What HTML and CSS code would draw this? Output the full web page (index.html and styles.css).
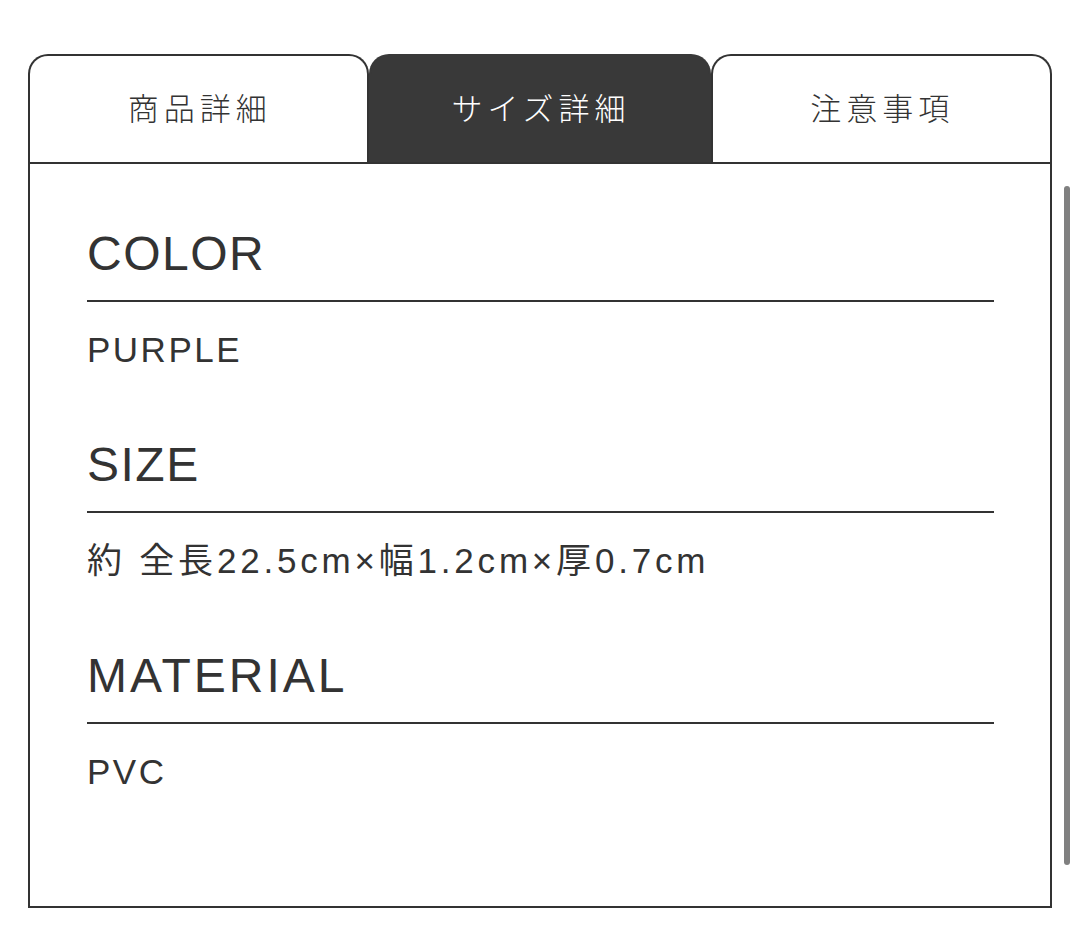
FILE: index.html
```html
<!DOCTYPE html>
<html lang="ja">
<head>
<meta charset="utf-8">
<title>サイズ詳細</title>
<link rel="stylesheet" href="styles.css">
</head>
<body>
<div class="wrap">
  <div class="tabs">
    <div class="tab">商品詳細</div>
    <div class="tab tab-active">サイズ詳細</div>
    <div class="tab">注意事項</div>
  </div>
  <div class="panel">
    <section class="spec">
      <h2 class="spec-title">COLOR</h2>
      <p class="spec-value">PURPLE</p>
    </section>
    <section class="spec">
      <h2 class="spec-title">SIZE</h2>
      <p class="spec-value spec-value-wide">約 全長22.5cm×幅1.2cm×厚0.7cm</p>
    </section>
    <section class="spec">
      <h2 class="spec-title spec-title-wide">MATERIAL</h2>
      <p class="spec-value">PVC</p>
    </section>
  </div>
  <div class="scrollbar"></div>
</div>
</body>
</html>
```

FILE: styles.css
```css
* { box-sizing: border-box; }
html, body { margin: 0; padding: 0; background: #fff; }
body {
  font-family: "Liberation Sans", "Noto Sans CJK JP", sans-serif;
  color: #333;
}
.wrap {
  position: relative;
  width: 1024px;
  margin: 54px 0 0 28px;
}
.tabs {
  display: flex;
  height: 108px;
}
.tab {
  flex: 1;
  display: flex;
  align-items: center;
  justify-content: center;
  border: 2px solid #333;
  border-bottom: none;
  border-radius: 20px 20px 0 0;
  background: #fff;
  font-family: "Noto Sans CJK JP", sans-serif;
  font-weight: 300;
  font-size: 31px;
  letter-spacing: 5px;
  padding-left: 2px;
  padding-bottom: 6px;
  color: #333;
}
.tab-active {
  background: #393939;
  border-color: #393939;
  color: #fff;
}
.panel {
  height: 746px;
  border: 2px solid #333;
  padding: 66px 56px 0 57px;
}
.spec { margin-bottom: 74px; }
.spec-title {
  margin: 0;
  font-weight: 400;
  font-size: 48px;
  line-height: 48px;
  letter-spacing: 1.5px;
  padding-bottom: 22px;
  border-bottom: 2px solid #333;
}
.spec-title-wide { letter-spacing: 3px; }
.spec-value {
  margin: 30px 0 0;
  font-size: 35px;
  line-height: 35px;
  letter-spacing: 2.5px;
}
.spec-value-wide { letter-spacing: 3.8px; }
.scrollbar {
  position: absolute;
  left: 1036px;
  top: 132px;
  width: 6px;
  height: 679px;
  border-radius: 3px;
  background: #808080;
}
```
